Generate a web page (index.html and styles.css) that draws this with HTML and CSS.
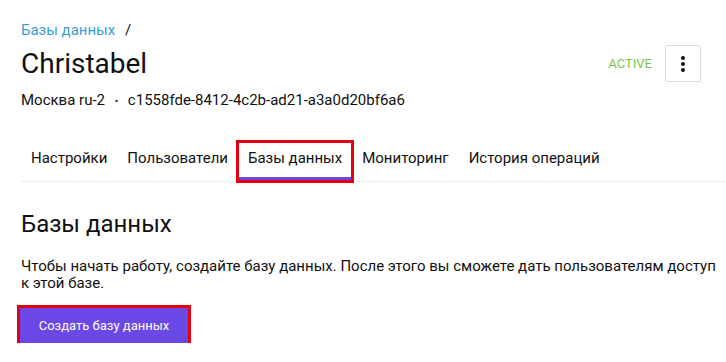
FILE: index.html
```html
<!DOCTYPE html>
<html lang="ru">
<head>
    <meta charset="UTF-8">
    <meta name="viewport" content="width=device-width, initial-scale=1.0">
    <title>Christabel — Базы данных</title>
    <link rel="stylesheet" href="styles.css">
</head>
<body>
    <div class="page">
        <div class="breadcrumb">
            <a href="#">Базы данных</a>
            <span class="sep">/</span>
        </div>

        <div class="title-row">
            <h1 class="title">Christabel</h1>
            <div class="title-actions">
                <span class="status">ACTIVE</span>
                <button class="kebab" aria-label="Меню">
                    <span></span><span></span><span></span>
                </button>
            </div>
        </div>

        <div class="meta">
            <span>Москва ru-2</span>
            <span class="dot">•</span>
            <span>c1558fde-8412-4c2b-ad21-a3a0d20bf6a6</span>
        </div>

        <div class="tabs">
            <a href="#" class="tab">Настройки</a>
            <a href="#" class="tab">Пользователи</a>
            <a href="#" class="tab active">Базы данных</a>
            <a href="#" class="tab">Мониторинг</a>
            <a href="#" class="tab">История операций</a>
        </div>

        <h2 class="section-title">Базы данных</h2>
        <p class="section-text">Чтобы начать работу, создайте базу данных. После этого вы сможете дать пользователям доступ к этой базе.</p>
        <button class="primary-button">Создать базу данных</button>
    </div>
</body>
</html>
```

FILE: styles.css
```css
body {
    margin: 0;
    font-family: Roboto, "Liberation Sans", sans-serif;
    color: #111;
    background-color: #fff;
    overflow: hidden;
}

.page {
    padding: 20px 25px 0 21px;
}

.breadcrumb {
    font-size: 15px;
    line-height: 20px;
}

.breadcrumb a {
    color: #3a9fd6;
    text-decoration: none;
}

.breadcrumb .sep {
    margin-left: 6px;
    color: #111;
}

.title-row {
    display: flex;
    justify-content: space-between;
    align-items: center;
    margin-top: 5px;
}

.title {
    margin: 0;
    font-size: 28px;
    font-weight: 400;
    line-height: 32px;
}

.title-actions {
    display: flex;
    align-items: center;
}

.status {
    color: #7bc64a;
    font-size: 13px;
    margin-right: 13px;
}

.kebab {
    width: 36px;
    height: 37px;
    border: 1px solid #dadada;
    border-radius: 2px;
    background-color: #fff;
    display: flex;
    flex-direction: column;
    align-items: center;
    justify-content: center;
    gap: 2px;
    padding: 0;
    cursor: pointer;
}

.kebab span {
    width: 4px;
    height: 4px;
    border-radius: 50%;
    background-color: #111;
}

.meta {
    margin-top: 8px;
    font-size: 15px;
    line-height: 20px;
}

.meta .dot {
    margin: 0 6px;
    font-size: 10px;
}

.tabs {
    display: flex;
    margin-top: 30px;
    margin-right: -25px;
    border-bottom: 1px solid #ebebeb;
}

.tab {
    padding: 6px 10px 9px;
    font-size: 15px;
    line-height: 20px;
    color: #111;
    text-decoration: none;
    border-bottom: 4px solid transparent;
}

.tab.active {
    border-bottom-color: #6c47e6;
    outline: 3px solid #e3000f;
    outline-offset: -1px;
}

.section-title {
    margin: 27px 0 0;
    font-size: 24px;
    font-weight: 400;
    line-height: 30px;
}

.section-text {
    width: 705px;
    margin: 19px 0 0;
    font-size: 15px;
    line-height: 17px;
}

.primary-button {
    margin: 16px 0 0 -1px;
    width: 168px;
    height: 35px;
    border: none;
    background-color: #6a48e6;
    color: #fff;
    font-family: Roboto, "Liberation Sans", sans-serif;
    font-size: 13px;
    outline: 3px solid #e3000f;
    cursor: pointer;
}
```
